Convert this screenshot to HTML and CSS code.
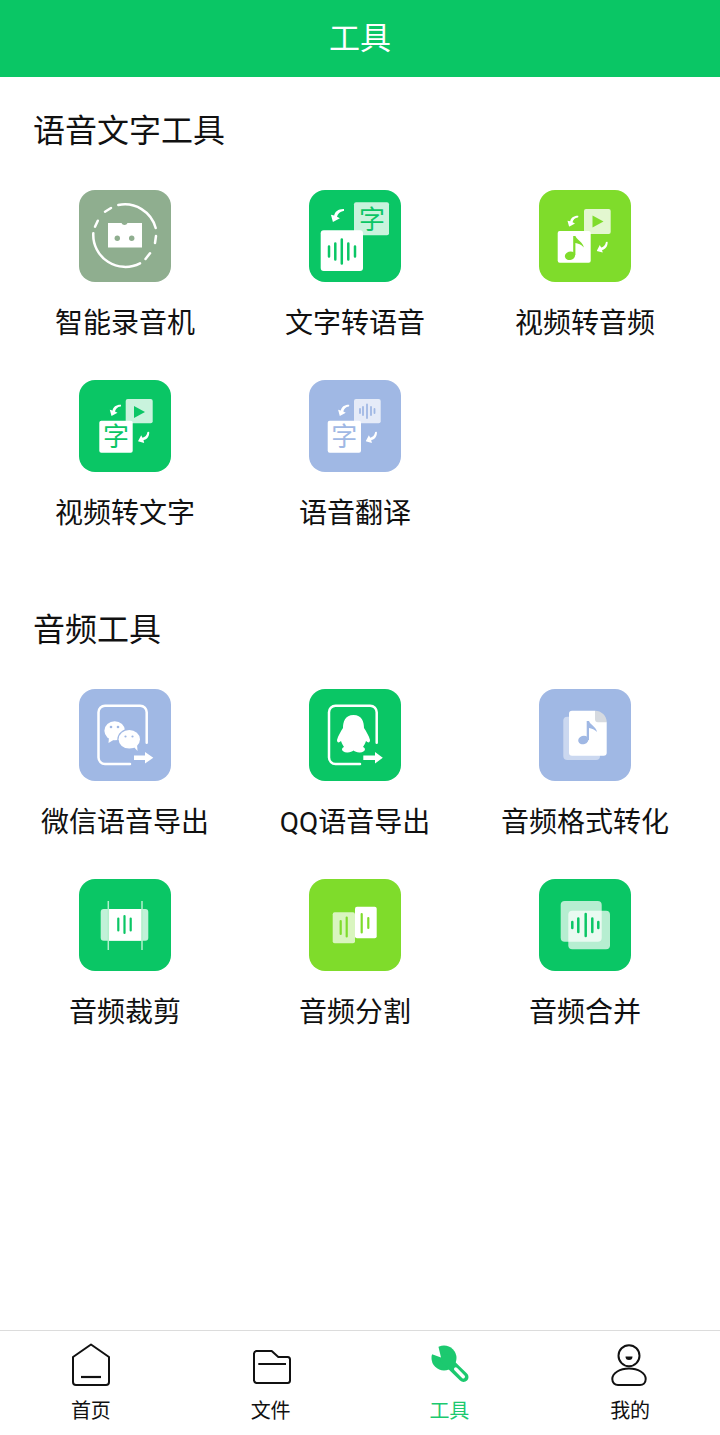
FILE: index.html
```html
<!DOCTYPE html>
<html lang="zh">
<head>
<meta charset="utf-8">
<title>工具</title>
<link rel="stylesheet" href="styles.css">
</head>
<body>
<svg class="defs" width="0" height="0">
  <symbol id="arw" viewBox="0 0 12 12"><path fill="#fff" d="M12 .8C7.500 .5 4 3 3.600 6.500L.8 5.800 2.500 12 8.500 8.800 6 7.500C6.500 5 8.500 3 11.500 2.600 12.700 2 12.700 1.200 12 .8z"/></symbol>
  <symbol id="arw2" viewBox="0 0 12 12"><path fill="#fff" d="M11.200 0C11.500 4.500 9 8 5.500 8.400L6.200 11.200 0 9.500 3.200 3.500 4.500 6C7 5.500 9 3.500 9.400 .5 10 -.7 10.800 -.7 11.200 0z"/></symbol>
</svg>

<div class="page">
  <div class="topbar">工具</div>

  <div class="main">
    <div class="section">
      <div class="section-title">语音文字工具</div>
      <div class="tools">
        <div class="tool">
          <svg class="ico" viewBox="0 0 92 92">
            <rect width="92" height="92" rx="16" fill="#8fae8f"/>
            <g fill="none" stroke="#fff" stroke-width="2.500" stroke-linecap="round">
              <path d="M39.300 15A32 32 0 0 1 76.700 38"/>
              <path d="M77 46L76 53"/>
              <path d="M71 63.300L66.500 69"/>
              <path d="M61 73.300A32 32 0 0 1 14.300 43.300"/>
              <path d="M16 36.700L18.800 30.700"/>
              <path d="M26 21.700L32 18"/>
            </g>
            <path fill="#fff" d="M29 33H42.500A3.200 3.200 0 0 0 48.500 33H63V57.500H29z"/>
            <circle cx="38.300" cy="48.300" r="2.700" fill="#8fae8f"/>
            <circle cx="52.700" cy="48.300" r="2.700" fill="#8fae8f"/>
          </svg>
          <div class="tool-name">智能录音机</div>
        </div>
        <div class="tool">
          <svg class="ico" viewBox="0 0 92 92">
            <rect width="92" height="92" rx="16" fill="#0ac665"/>
            <rect x="45" y="12.300" width="35" height="33" rx="2" fill="#fff" fill-opacity=".78"/>
            <text class="zi" x="63" y="39" fill="#0ac665">字</text>
            <use href="#arw" x="21" y="18" width="14" height="14"/>
            <rect x="11.700" y="40.300" width="42.300" height="40.700" rx="3" fill="#fff"/>
            <path stroke="#0ac665" stroke-width="2.500" stroke-linecap="round" d="M20 56.500V66.500M26.300 53.500V69.500M32.800 49.500V73.500M39.300 53.500V69.500M46 56.500V66.500"/>
          </svg>
          <div class="tool-name">文字转语音</div>
        </div>
        <div class="tool">
          <svg class="ico" viewBox="0 0 92 92">
            <rect width="92" height="92" rx="16" fill="#7fdc2b"/>
            <rect x="45" y="19" width="26.700" height="25" rx="2" fill="#fff" fill-opacity=".78"/>
            <path fill="#7fdc2b" d="M53.500 25.500L64.500 31.500 53.500 37.500z"/>
            <use href="#arw" x="27.700" y="25" width="11.700" height="11.700"/>
            <use href="#arw2" x="57.700" y="51.700" width="11.700" height="11.700"/>
            <rect x="18.700" y="41" width="33" height="31.700" rx="2" fill="#fff"/>
            <ellipse cx="31" cy="65.700" rx="5.200" ry="4.200" fill="#7fdc2b" transform="rotate(-18 31 65.700)"/>
            <path fill="#7fdc2b" d="M34.200 46H36.400C38 50 44 52 44.800 57.500 42.500 54.500 39 53.500 36.400 53V65H34.200z"/>
          </svg>
          <div class="tool-name">视频转音频</div>
        </div>
        <div class="tool">
          <svg class="ico" viewBox="0 0 92 92">
            <rect width="92" height="92" rx="16" fill="#0ac665"/>
            <rect x="46.700" y="19" width="27" height="24.300" rx="2" fill="#fff" fill-opacity=".78"/>
            <path fill="#0ac665" d="M55 26L66 32 55 38z"/>
            <use href="#arw" x="30" y="24" width="12" height="12"/>
            <use href="#arw2" x="59" y="51.700" width="12" height="12"/>
            <rect x="20.300" y="40.700" width="33.400" height="32" rx="2" fill="#fff"/>
            <text class="zi" x="37" y="66" fill="#0ac665">字</text>
          </svg>
          <div class="tool-name">视频转文字</div>
        </div>
        <div class="tool">
          <svg class="ico" viewBox="0 0 92 92">
            <rect width="92" height="92" rx="16" fill="#a0b8e4"/>
            <rect x="45" y="19" width="26.700" height="24.300" rx="2" fill="#fff" fill-opacity=".72"/>
            <path stroke="#a0b8e4" stroke-width="1.800" stroke-linecap="round" d="M51 29V33M54 27V35M58 24.500V38M62 27V35M65.500 29V33"/>
            <use href="#arw" x="28.300" y="24" width="12" height="12"/>
            <use href="#arw2" x="56.700" y="51.700" width="12" height="12"/>
            <rect x="18.700" y="40.700" width="33.300" height="32" rx="2" fill="#fff"/>
            <text class="zi" x="35.300" y="66" fill="#a0b8e4">字</text>
          </svg>
          <div class="tool-name">语音翻译</div>
        </div>
      </div>
    </div>

    <div class="section">
      <div class="section-title">音频工具</div>
      <div class="tools">
        <div class="tool">
          <svg class="ico" viewBox="0 0 92 92">
            <rect width="92" height="92" rx="16" fill="#a0b8e4"/>
            <path fill="none" stroke="#fff" stroke-width="2.500" stroke-linecap="round" d="M51 75H26A6.500 6.500 0 0 1 19.500 68.500V23.200A6.500 6.500 0 0 1 26 16.700H61.200A6.500 6.500 0 0 1 67.700 23.200V53.700"/>
            <path fill="#fff" d="M55 66.500H66V63L74.300 68.700 66 74.500V71H55z"/>
            <ellipse cx="35.700" cy="41.700" rx="10.300" ry="9.500" fill="#fff"/>
            <path fill="#fff" d="M30 48L29.500 54 36 50z"/>
            <ellipse cx="50.300" cy="50.300" rx="12" ry="10.500" fill="#a0b8e4"/>
            <ellipse cx="50.300" cy="50.300" rx="10.700" ry="9.300" fill="#fff"/>
            <path fill="#fff" d="M54 57L58.500 62 58 55z"/>
            <g fill="#a0b8e4">
              <circle cx="32" cy="38" r="1.300"/><circle cx="39" cy="38" r="1.300"/>
              <circle cx="46.500" cy="47.500" r="1.100"/><circle cx="53.500" cy="47.500" r="1.100"/>
            </g>
          </svg>
          <div class="tool-name">微信语音导出</div>
        </div>
        <div class="tool">
          <svg class="ico" viewBox="0 0 92 92">
            <rect width="92" height="92" rx="16" fill="#0ac665"/>
            <path fill="none" stroke="#fff" stroke-width="2.500" stroke-linecap="round" d="M51 75H26.500A6.500 6.500 0 0 1 20 68.500V23.200A6.500 6.500 0 0 1 26.500 16.700H61.200A6.500 6.500 0 0 1 67.700 23.200V53.700"/>
            <path fill="#fff" d="M54.300 66.500H66V63L73.800 68.700 66 74.500V71H54.300z"/>
            <path fill="#fff" d="M44.500 26C36 26 34 33 34 39 32 42 29 47 28 51 28 54 30 54 32 52 33 55 34 56 35 58 32 59 32 63 38 63.500 41 63.700 43 62.500 44.500 61.500 46 62.500 48 63.700 51 63.500 57 63 57 59 54 58 55 56 56 55 57 52 59 54 61 54 61 51 60 47 57 42 55 39 55 33 53 26 44.500 26z"/>
          </svg>
          <div class="tool-name"><span class="latin">QQ</span>语音导出</div>
        </div>
        <div class="tool">
          <svg class="ico" viewBox="0 0 92 92">
            <rect width="92" height="92" rx="16" fill="#a0b8e4"/>
            <rect x="24.300" y="27.700" width="36.700" height="43.300" rx="4" fill="#fff" fill-opacity=".45"/>
            <path fill="#fff" d="M33 21.700H56L67.700 33.300V63.700A3 3 0 0 1 64.700 66.700H33A3 3 0 0 1 30 63.700V24.700A3 3 0 0 1 33 21.700z"/>
            <path fill="#d6dae0" d="M56 21.700A11.700 11.700 0 0 1 67.700 33.300H59A3 3 0 0 1 56 30.300z"/>
            <ellipse cx="44.300" cy="51" rx="5.200" ry="4.200" fill="#a0b8e4" transform="rotate(-18 44.300 51)"/>
            <path fill="#a0b8e4" d="M47.700 32H50C51.500 36 57 37.500 58 43 56 40.500 52.500 39.500 50 39V51H47.700z"/>
          </svg>
          <div class="tool-name">音频格式转化</div>
        </div>
        <div class="tool">
          <svg class="ico" viewBox="0 0 92 92">
            <rect width="92" height="92" rx="16" fill="#0ac665"/>
            <rect x="21.700" y="30" width="47.600" height="31.700" rx="3" fill="#fff" fill-opacity=".75"/>
            <rect x="29.300" y="30" width="33.400" height="31.700" fill="#fff"/>
            <path stroke="#b3f0cc" stroke-width="1.500" d="M29.300 22V71M63 22V71"/>
            <path stroke="#0ac665" stroke-width="2.200" stroke-linecap="round" d="M39.300 39.500V51.500M45.500 37V54M51.700 39.500V51.500"/>
          </svg>
          <div class="tool-name">音频裁剪</div>
        </div>
        <div class="tool">
          <svg class="ico" viewBox="0 0 92 92">
            <rect width="92" height="92" rx="16" fill="#7fdc2b"/>
            <rect x="23.700" y="33.300" width="22.300" height="31" rx="2" fill="#fff" fill-opacity=".7"/>
            <rect x="46" y="27.700" width="21.700" height="31.600" rx="2" fill="#fff"/>
            <path stroke="#7fdc2b" stroke-width="2.200" stroke-linecap="round" d="M31.700 42V55M37.700 38.500V57.500M52.700 35V53.500M59.300 39V49"/>
          </svg>
          <div class="tool-name">音频分割</div>
        </div>
        <div class="tool">
          <svg class="ico" viewBox="0 0 92 92">
            <rect width="92" height="92" rx="16" fill="#0ac665"/>
            <rect x="21.700" y="22" width="41" height="40.700" rx="4" fill="#fff" fill-opacity=".7"/>
            <rect x="29.300" y="31.700" width="41.700" height="38.600" rx="4" fill="#fff" fill-opacity=".7"/>
            <path stroke="#0ac665" stroke-width="2.500" stroke-linecap="round" d="M33.300 43V49M39.300 39.500V53M46.700 35V57M53.300 39.500V53M59.300 43V49"/>
          </svg>
          <div class="tool-name">音频合并</div>
        </div>
      </div>
    </div>
  </div>

  <div class="tabbar">
    <div class="tab">
      <svg class="tab-ico" viewBox="0 0 40 44">
        <path fill="none" stroke="#111" stroke-width="2" stroke-linejoin="round" d="M20 1.500L38 14V39A3 3 0 0 1 35 42H5A3 3 0 0 1 2 39V14z"/>
        <path stroke="#111" stroke-width="2.200" d="M10 34H30"/>
      </svg>
      <div class="tab-name">首页</div>
    </div>
    <div class="tab">
      <svg class="tab-ico" viewBox="0 0 40 44">
        <path fill="none" stroke="#111" stroke-width="2" stroke-linejoin="round" d="M5.300 8H20.700L27.300 14H36.700A2.500 2.500 0 0 1 39 16.500V37.500A2.500 2.500 0 0 1 36.700 40H5.300A3 3 0 0 1 3 37.500V10.500A3 3 0 0 1 5.300 8z"/>
        <path stroke="#111" stroke-width="2" d="M7.300 21H35"/>
      </svg>
      <div class="tab-name">文件</div>
    </div>
    <div class="tab tab-on">
      <svg class="tab-ico" viewBox="0 0 40 44">
        <circle cx="15" cy="15" r="12.500" fill="#1cc96f"/>
        <path stroke="#1cc96f" stroke-width="10" stroke-linecap="round" d="M16 16L34.500 34"/>
        <path stroke="#fff" stroke-width="3.400" stroke-linecap="round" d="M26.700 26L34.300 33.700"/>
        <path fill="#fff" d="M12 14.500L1 10.500 0 5 7 0 9.500 4z"/>
      </svg>
      <div class="tab-name">工具</div>
    </div>
    <div class="tab">
      <svg class="tab-ico" viewBox="0 0 40 44">
        <circle cx="19" cy="12.700" r="10.500" fill="none" stroke="#111" stroke-width="2"/>
        <path fill="#111" d="M15.500 13.500H22.500A3.500 3.500 0 0 1 15.500 13.500z"/>
        <path fill="none" stroke="#111" stroke-width="2" d="M19 25.500C28 25.500 35.700 30 35.700 36 35.700 40 33 42 30 42H8C5 42 2.300 40 2.300 36 2.300 30 10 25.500 19 25.500z"/>
      </svg>
      <div class="tab-name">我的</div>
    </div>
  </div>
</div>
</body>
</html>
```

FILE: styles.css
```css
html, body { margin: 0; padding: 0; background: #fff; }
body { font-family: "Noto Sans CJK SC", "Noto Sans", sans-serif; color: #111; }
.defs { display: block; width: 0; height: 0; overflow: hidden; }

.page { display: flex; flex-direction: column; height: 1435px; }

.topbar { height: 77px; line-height: 72px; text-align: center; font-size: 31px; color: #fff; background: #0ac665; }

.main { flex: 1; padding: 31px 10px 0; }
.section { margin-bottom: 75px; }
.section-title { height: 44px; line-height: 40px; padding-left: 23px; font-size: 32px; }

.tools { display: grid; grid-template-columns: repeat(3, 230px); row-gap: 38px; margin-top: 38px; }
.tool { display: flex; flex-direction: column; align-items: center; }
.ico { display: block; width: 92px; height: 92px; }
.tool-name { margin-top: 20px; height: 40px; line-height: 38px; font-size: 28px; white-space: nowrap; }
.latin { font-family: Roboto, sans-serif; }
.zi { font-size: 26px; text-anchor: middle; font-family: "Noto Sans CJK SC", sans-serif; }

.tabbar { display: flex; height: 100px; padding-left: 1px; border-top: 1px solid #dcdcdc; margin-bottom: 4px; }
.tab { width: 180px; display: flex; flex-direction: column; align-items: center; padding-top: 12px; }
.tab-ico { display: block; width: 40px; height: 44px; }
.tab-name { margin-top: 9px; height: 30px; line-height: 28px; font-size: 20px; }
.tab-on { margin-left: -1px; margin-right: 1px; }
.tab-on .tab-name { color: #1cc96f; }
```
